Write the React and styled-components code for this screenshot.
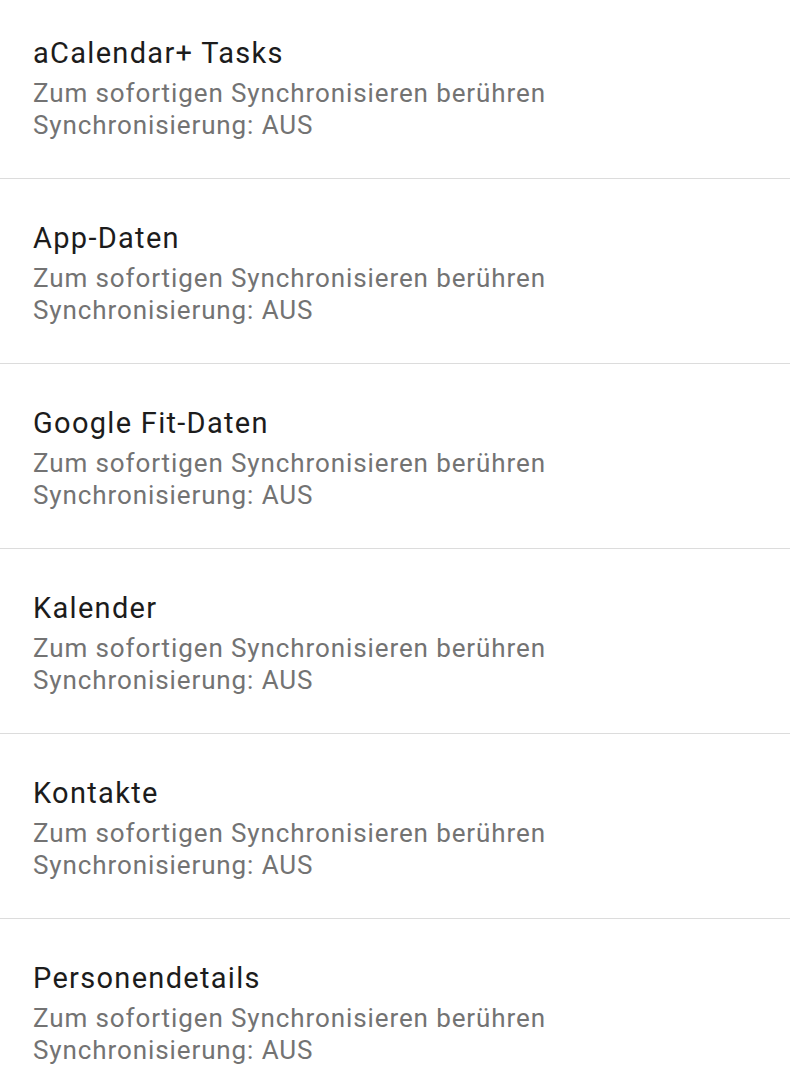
import React from "react";
import styled, { createGlobalStyle } from "styled-components";

const Global = createGlobalStyle`
  html, body { margin: 0; padding: 0; background: #ffffff; }
  body { font-family: Roboto, "Noto Sans", "Liberation Sans", sans-serif; -webkit-font-smoothing: antialiased; }
`;

const List = styled.div`
  display: flex;
  flex-direction: column;
  margin-top: -6px;
  overflow: hidden;
`;

const Row = styled.div`
  display: flex;
  flex-direction: column;
  height: 185px;
  box-sizing: border-box;
  padding: 41px 33px 0;
  border-bottom: 1px solid #dcdcdc;
`;

const Title = styled.div`
  font-size: 29px;
  line-height: 36px;
  letter-spacing: 1.3px;
  color: #1c1c1c;
`;

const Sub = styled.div`
  font-size: 26px;
  line-height: 32px;
  letter-spacing: 0.9px;
  color: #737373;
  margin-top: ${(p) => (p.$first ? "6px" : "0")};
`;

const items = [
  "aCalendar+ Tasks",
  "App-Daten",
  "Google Fit-Daten",
  "Kalender",
  "Kontakte",
  "Personendetails",
];

export default function App() {
  return (
    <>
      <Global />
      <List>
        {items.map((t) => (
          <Row key={t}>
            <Title>{t}</Title>
            <Sub $first>Zum sofortigen Synchronisieren berühren</Sub>
            <Sub>Synchronisierung: AUS</Sub>
          </Row>
        ))}
      </List>
    </>
  );
}
